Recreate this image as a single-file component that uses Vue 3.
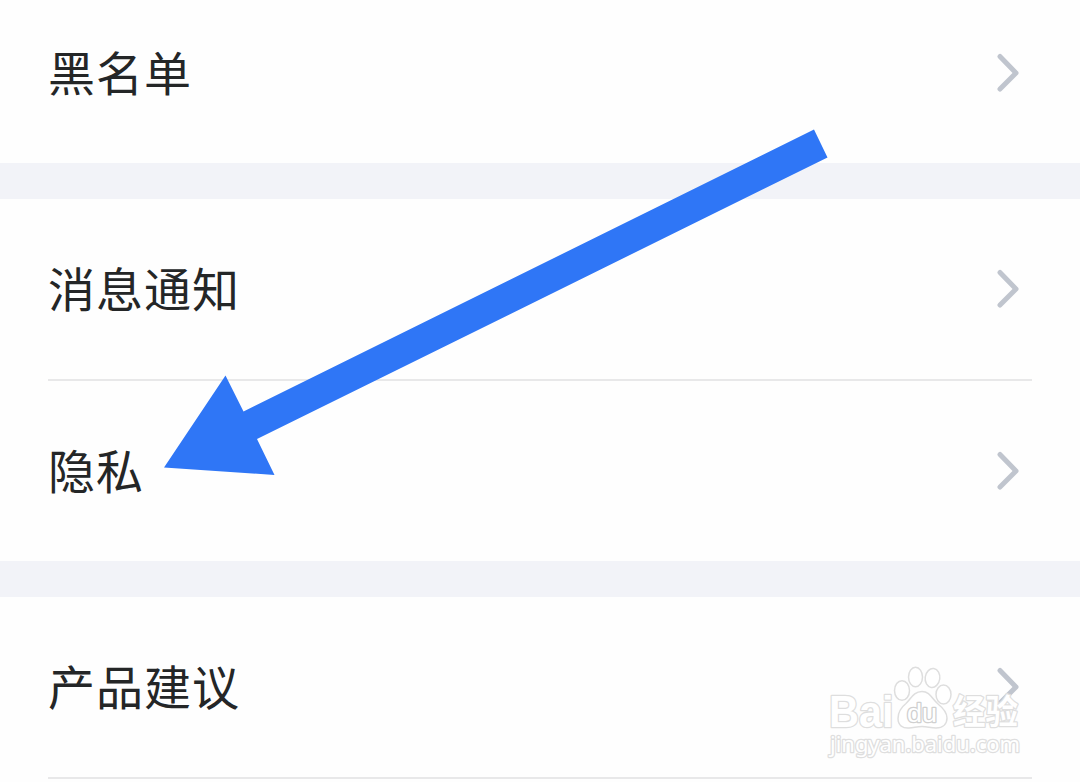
<script setup>
const groups = [['黑名单'], ['消息通知', '隐私'], ['产品建议', '']]
</script>

<template>
  <main class="screen">
    <section v-for="(group, index) in groups" :key="index" class="group">
      <div v-for="label in group" :key="label" class="row">
        <template v-if="label">
          <span class="label">{{ label }}</span>
          <svg class="chevron" width="24" height="40" viewBox="0 0 24 40">
            <path d="M4 3.5 20 20 4 36" />
          </svg>
        </template>
      </div>
    </section>

    <svg class="arrow" width="1080" height="782" viewBox="0 0 1080 782">
      <path d="M814 129.5 827.5 157.5 257 439 274.5 475 164 467.5 225.5 375.5 243.5 411.5Z" />
    </svg>

    <svg class="watermark" width="210" height="110" viewBox="820 655 210 110">
      <text class="brand" x="829" y="726.5" textLength="64.5" lengthAdjust="spacingAndGlyphs">Bai</text>
      <path d="M922 691.5c-8 0-11 7-16 12-5 4-8 9-8 15 0 7 5 10 11 9.500 5-.3 8-1.500 13-1.500s9 1.500 14 1.500c7 0 11-4 11-10 0-6-4-10-9-14-6-5-8-12.500-16-12.500Z" />
      <ellipse cx="902" cy="690.5" rx="7.5" ry="9.8" />
      <ellipse cx="915.5" cy="677" rx="7" ry="9.8" />
      <ellipse cx="932.5" cy="678" rx="7.3" ry="9.5" transform="rotate(8 932.5 678)" />
      <ellipse cx="943.5" cy="694.5" rx="7.5" ry="9.5" />
      <text class="du" x="907" y="721.5" textLength="30" lengthAdjust="spacingAndGlyphs">du</text>
      <text class="jingyan" x="953" y="724" textLength="65" lengthAdjust="spacingAndGlyphs">经验</text>
      <text class="address" x="830" y="752" textLength="190" lengthAdjust="spacingAndGlyphs">jingyan.baidu.com</text>
    </svg>
  </main>
</template>

<style>
html,
body {
  margin: 0;
  overflow: hidden;
}
</style>

<style scoped>
.screen {
  position: relative;
  height: 782px;
  overflow: hidden;
  background: #f2f3f8;
  font-family: "Noto Sans CJK SC", sans-serif;
}

.group {
  margin-bottom: 36px;
  padding: 0 48px;
  background: #fefefe;
}

.group:first-child {
  margin-top: -17px;
}

.row {
  display: flex;
  align-items: center;
  justify-content: space-between;
  box-sizing: border-box;
  height: 180px;
  padding-right: 12px;
}

.row + .row {
  height: 182px;
  border-top: 2px solid #e8e8e9;
}

.label {
  padding-bottom: 5px;
  color: #242627;
  font-size: 47px;
  line-height: 60px;
  letter-spacing: 1px;
}

.chevron path {
  fill: none;
  stroke: #c0c5ce;
  stroke-width: 5;
  stroke-linecap: round;
  stroke-linejoin: round;
}

.arrow {
  position: absolute;
  top: 0;
  left: 0;
  fill: #2f76f6;
}

.watermark {
  position: absolute;
  top: 655px;
  left: 820px;
  fill: #fff;
  fill-opacity: 0.8;
  stroke: #dedede;
  stroke-width: 1.5;
}

.watermark text {
  stroke-width: 2.6;
  stroke-linejoin: round;
  paint-order: stroke;
  fill-opacity: 1;
}

.brand {
  font: 700 44px "Liberation Sans", sans-serif;
}

.watermark .du {
  font: 400 26px "Liberation Sans", sans-serif;
  stroke: #d0d0d0;
}

.jingyan {
  font: 700 34px "Noto Sans CJK SC", sans-serif;
}

.address {
  font: 400 22px "Noto Sans", sans-serif;
}
</style>
